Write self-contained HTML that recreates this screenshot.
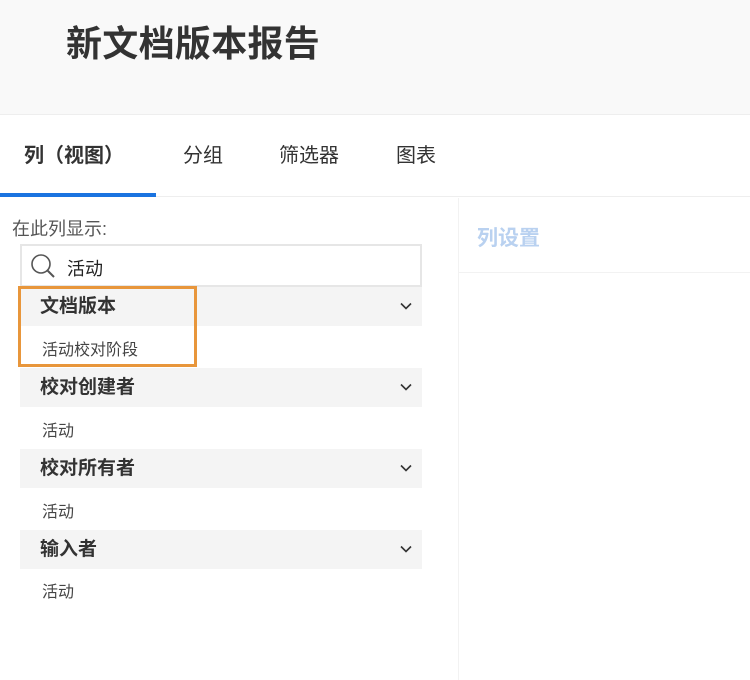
<!DOCTYPE html>
<html><head><meta charset="utf-8"><style>
*{margin:0;padding:0;box-sizing:border-box}
body{width:750px;height:680px;background:#fff;font-family:"Liberation Sans","Noto Sans CJK SC",sans-serif;position:relative;overflow:hidden;color:#333}
.hdr{position:absolute;left:0;top:0;width:750px;height:115px;background:#f9f9f9;border-bottom:1px solid #eee}
.hdr h1{position:absolute;left:66px;top:20px;font-size:36px;font-weight:bold;color:#333;line-height:48px;letter-spacing:0.3px}
.tab{position:absolute;top:141px;font-size:20px;line-height:30px;color:#333}
.line{position:absolute;left:0;top:196px;width:750px;height:1px;background:#eee}
.ul{position:absolute;left:0;top:193px;width:156px;height:4px;background:#1a73e0}
.lbl{position:absolute;left:12px;top:216px;font-size:18px;color:#555;line-height:26px}
.search{position:absolute;left:20px;top:244px;width:402px;height:43px;border:2px solid #e6e6e6;background:#fff}
.search span{position:absolute;left:45px;top:11px;font-size:18px;line-height:24px;color:#222}
.grp{position:absolute;left:20px;width:402px;height:39px;background:#f4f4f4}
.grp b{position:absolute;left:20px;top:7px;font-size:19px;line-height:26px;color:#333}
.grp svg{position:absolute;left:380px;top:15px}
.item{position:absolute;left:42px;font-size:16px;line-height:22px;color:#444}
.box{position:absolute;left:18px;top:286px;width:179px;height:81px;border:3px solid #e8963b}
.vline{position:absolute;left:458px;top:198px;width:1px;height:482px;background:#f2f2f2}
.rh{position:absolute;left:477px;top:224px;font-size:21px;font-weight:bold;color:#b9d1f0;line-height:30px}
.hline{position:absolute;left:459px;top:272px;width:291px;height:1px;background:#f2f2f2}
</style></head><body>
<div class="hdr"><h1>新文档版本报告</h1></div>
<div class="tab" style="left:24px;font-weight:bold">列（视图）</div>
<div class="tab" style="left:183px">分组</div>
<div class="tab" style="left:279px">筛选器</div>
<div class="tab" style="left:396px">图表</div>
<div class="line"></div><div class="ul"></div>
<div class="lbl">在此列显示:</div>
<div class="search"><svg width="28" height="28" style="position:absolute;left:8px;top:7px" viewBox="0 0 28 28"><circle cx="11" cy="11" r="9" fill="none" stroke="#555" stroke-width="1.6"/><line x1="17.5" y1="17.5" x2="24" y2="24" stroke="#555" stroke-width="2"/></svg><span>活动</span></div>
<div class="grp" style="top:287px"><b>文档版本</b><svg width="12" height="8" viewBox="0 0 12 8"><path d="M1 1.5L6 6.5L11 1.5" fill="none" stroke="#333" stroke-width="1.6"/></svg></div>
<div class="item" style="top:340px">活动校对阶段</div>
<div class="grp" style="top:368px"><b>校对创建者</b><svg width="12" height="8" viewBox="0 0 12 8"><path d="M1 1.5L6 6.5L11 1.5" fill="none" stroke="#333" stroke-width="1.6"/></svg></div>
<div class="item" style="top:421px">活动</div>
<div class="grp" style="top:449px"><b>校对所有者</b><svg width="12" height="8" viewBox="0 0 12 8"><path d="M1 1.5L6 6.5L11 1.5" fill="none" stroke="#333" stroke-width="1.6"/></svg></div>
<div class="item" style="top:502px">活动</div>
<div class="grp" style="top:530px"><b>输入者</b><svg width="12" height="8" viewBox="0 0 12 8"><path d="M1 1.5L6 6.5L11 1.5" fill="none" stroke="#333" stroke-width="1.6"/></svg></div>
<div class="item" style="top:582px">活动</div>
<div class="box"></div>
<div class="vline"></div>
<div class="rh">列设置</div>
<div class="hline"></div>
</body></html>
